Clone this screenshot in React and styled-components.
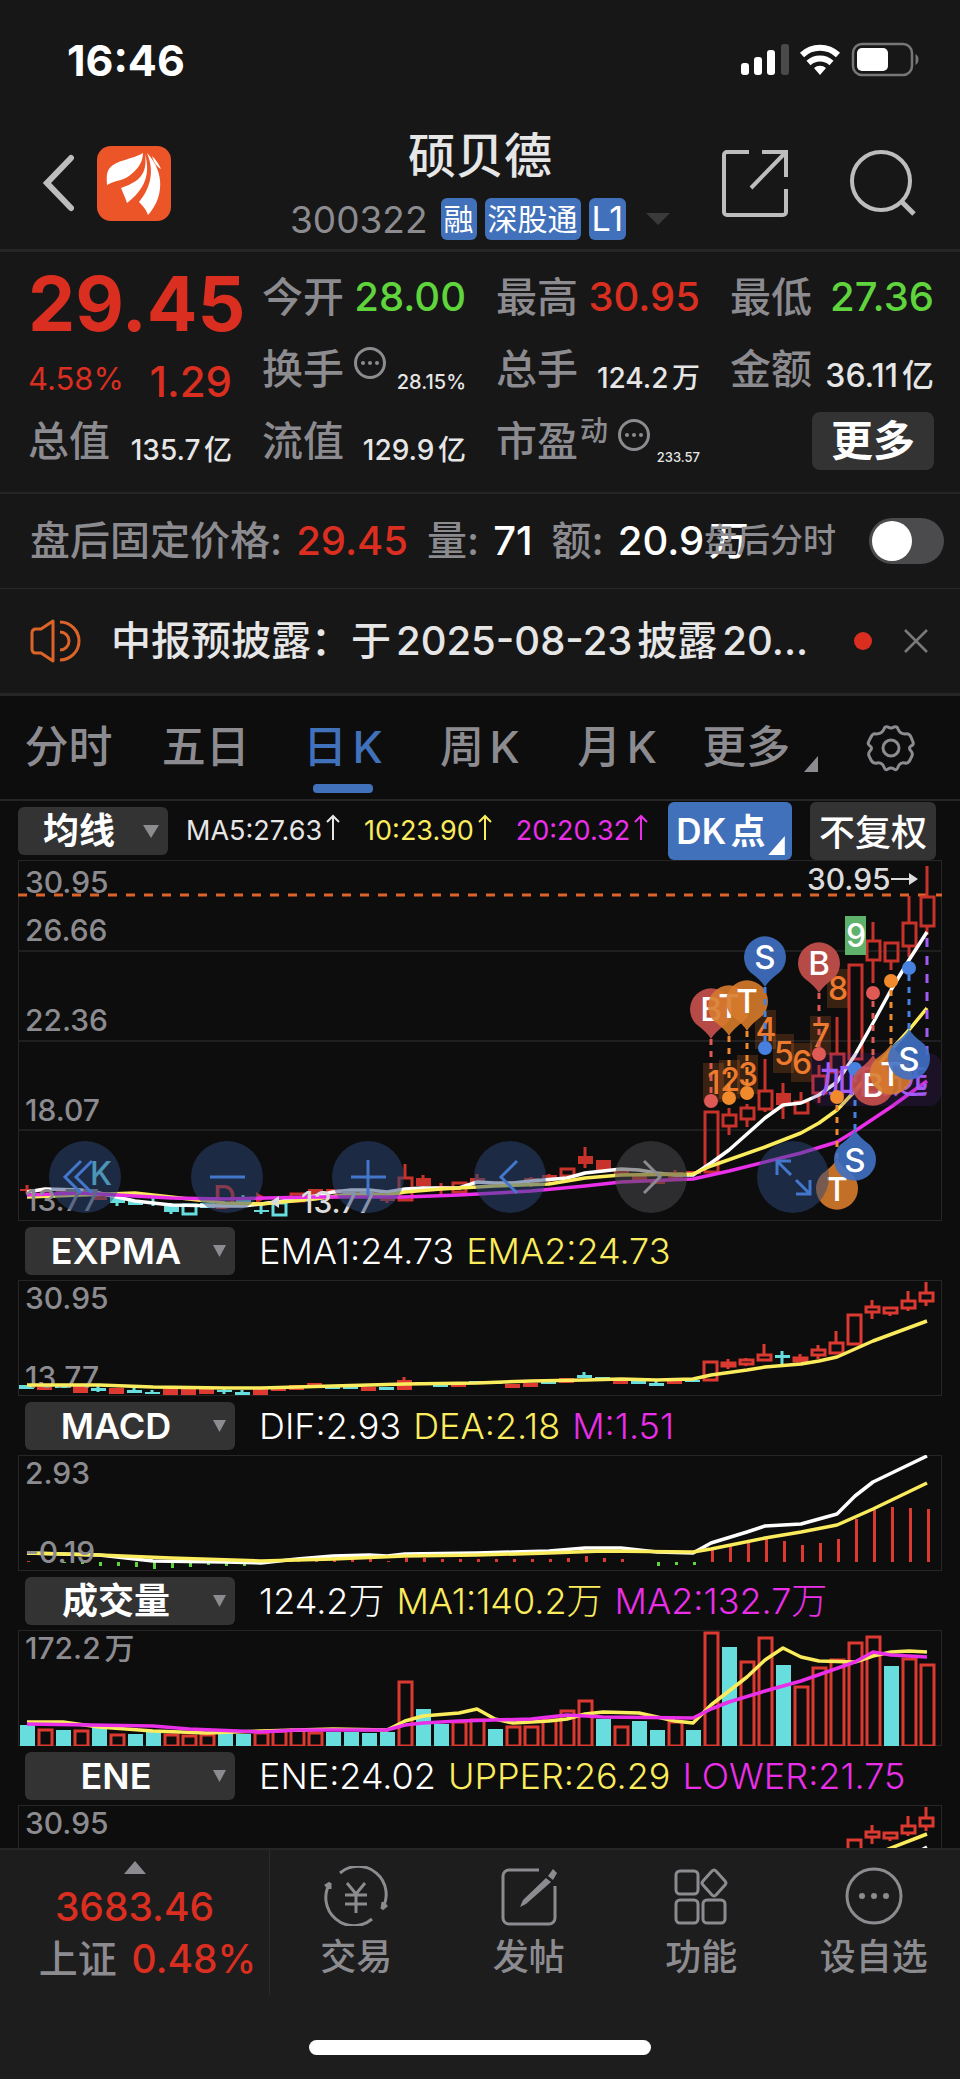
import React from "react";
import styled, { createGlobalStyle } from 'styled-components'

const RED = '#da2e20'
const GREEN = '#5fd43c'
const YELLOW = '#fbec5d'
const MAGENTA = '#ea2fe9'
const CYAN = '#67dedd'
const BLUE = '#4171bb'
const GRAY = '#8c8b90'
const LIGHT = '#e6e6e6'

const GlobalStyle = createGlobalStyle`
    * {
        box-sizing: border-box;
    }
    body {
        margin: 0;
        background: #171717;
        color: ${LIGHT};
        font-family: Inter, "Noto Sans CJK SC", sans-serif;
        text-autospace: normal;
    }
    button, select {
        margin: 0;
        padding: 0;
        border: 0;
        background: none;
        color: inherit;
        font: inherit;
    }
    svg {
        display: block;
    }
`

const Page = styled.div`
    display: flex;
    flex-direction: column;
    height: 100vh;
    overflow: hidden;
`

const StatusBar = styled.div`
    flex: none;
    display: flex;
    justify-content: space-between;
    align-items: center;
    height: 120px;
    padding: 0 40px 0 67px;
    color: white;
    font-size: 43px;
    font-weight: 700;
`

const Header = styled.header`
    flex: none;
    display: grid;
    grid-template-columns: 1fr auto 1fr;
    height: 132px;
    border-bottom: 3px solid #262626;
    .left, .right {
        display: flex;
        align-items: center;
    }
    .left {
        padding: 0 0 4px 43px;
        gap: 23px;
    }
    .right {
        justify-content: flex-end;
        padding: 0 44px 4px 0;
        gap: 62px;
    }
`

const Title = styled.div`
    text-align: center;
    h1 {
        margin: 4px 0 0;
        font-size: 48px;
        line-height: 64px;
        font-weight: 500;
    }
    .code {
        display: flex;
        align-items: center;
        gap: 8px;
        height: 62px;
        font-size: 37px;
        color: ${GRAY};
    }
    .code > span:first-child {
        margin-right: 5px;
    }
    .code svg {
        margin-left: 12px;
    }
`

const Badge = styled.span`
    padding: 0 3px;
    border-radius: 6px;
    background: ${BLUE};
    color: white;
    font-size: ${p => p.$level ? 34 : 30}px;
    line-height: 42px;
`

const Quote = styled.section`
    flex: none;
    display: grid;
    grid-template-columns: repeat(4, minmax(0, 1fr));
    grid-auto-rows: 72px;
    column-gap: 30px;
    padding: 9px 26px 15px 28px;
    border-bottom: 2px solid #262626;
    .price {
        grid-row: span 2;
    }
    .last {
        color: ${RED};
        font-size: 75px;
        font-weight: 700;
        line-height: 86px;
    }
    .change {
        display: flex;
        justify-content: space-between;
        align-items: center;
        color: ${RED};
        font-size: 31px;
        line-height: 58px;
    }
    .change b {
        padding-top: 6px;
        font-size: 42px;
        font-weight: 500;
    }
`

const Cell = styled.div`
    display: flex;
    justify-content: space-between;
    align-items: flex-end;
    white-space: nowrap;
    .label {
        display: flex;
        color: ${GRAY};
        font-size: 41px;
        font-weight: 500;
        line-height: 72px;
    }
    .label svg {
        margin: 14px 0 0 10px;
    }
    .label small {
        padding-left: 2px;
        font-size: 28px;
        line-height: 52px;
    }
    .value {
        padding-bottom: ${p => p.$size > 36 ? 16 : 13}px;
        color: ${p => p.$color || LIGHT};
        font-size: ${p => p.$size || 28}px;
        font-weight: 500;
        line-height: 1;
    }
`

const MoreButton = styled.button`
    justify-self: end;
    align-self: center;
    width: 122px;
    height: 58px;
    border-radius: 8px;
    background: #333333;
    color: white;
    font-size: 42px;
    font-weight: 700;
    line-height: 56px;
`

const FixedPrice = styled.section`
    flex: none;
    display: flex;
    align-items: center;
    height: 95px;
    padding: 0 16px 0 30px;
    border-bottom: 1px solid #2a2a2a;
    color: ${GRAY};
    white-space: nowrap;
    p {
        flex: 1;
        min-width: 0;
        margin: 0;
        padding-bottom: 6px;
        font-size: 40px;
        font-weight: 500;
    }
    p b {
        margin: 0 14px;
        color: white;
        font-weight: 500;
    }
    p b.up {
        color: ${RED};
    }
    label {
        display: flex;
        align-items: center;
        gap: 33px;
        font-size: 33px;
        font-weight: 500;
    }
    label span {
        padding-bottom: 6px;
    }
    input {
        appearance: none;
        width: 75px;
        height: 46px;
        margin: 0;
        padding: 3px;
        border-radius: 23px;
        background: #4b4b4d;
    }
    input::before {
        content: "";
        display: block;
        width: 40px;
        height: 40px;
        border-radius: 50%;
        background: white;
    }
    input:checked::before {
        margin-left: auto;
    }
`

const Notice = styled.section`
    flex: none;
    display: flex;
    align-items: center;
    height: 107px;
    padding: 0 32px 0 30px;
    border-bottom: 3px solid #262626;
    p {
        flex: 1;
        margin: 0;
        padding: 0 0 6px 29px;
        font-size: 40px;
        font-weight: 500;
        white-space: nowrap;
    }
    i {
        width: 18px;
        height: 18px;
        margin-right: 32px;
        border-radius: 50%;
        background: ${RED};
    }
`

const Tabs = styled.nav`
    flex: none;
    display: grid;
    grid-template-columns: repeat(7, 1fr);
    height: 105px;
    background: #0d0d0d;
    border-bottom: 2px solid #262626;
`

const Tab = styled.button`
    display: flex;
    justify-content: center;
    position: relative;
    color: ${p => p.$active ? BLUE : GRAY};
    font-size: 44px;
    font-weight: 500;
    line-height: 102px;
    white-space: nowrap;
    svg {
        align-self: center;
    }
    .corner {
        margin: 32px -12px 0 14px;
    }
    &::after {
        content: "";
        display: ${p => p.$active ? 'block' : 'none'};
        position: absolute;
        bottom: 6px;
        width: 60px;
        height: 9px;
        border-radius: 4px;
        background: ${BLUE};
    }
`

const Charts = styled.main`
    flex: 1;
    min-height: 0;
    overflow: hidden;
    padding: 0 18px;
    background: #0d0d0d;
`

const PanelHead = styled.div`
    display: flex;
    align-items: center;
    height: 59px;
    padding-left: ${p => p.$main ? 0 : 7}px;
    white-space: nowrap;
    .values {
        flex: 1;
        display: flex;
        gap: ${p => p.$main ? 24 : 12}px;
        padding-left: ${p => p.$main ? 18 : 24}px;
        font-size: ${p => p.$main ? 27 : 36}px;
        font-weight: ${p => p.$main ? 400 : 300};
        line-height: 48px;
        text-autospace: no-autospace;
    }
    .values svg {
        display: inline-block;
        margin-left: 4px;
    }
`

const Picker = styled.label`
    position: relative;
    select {
        display: block;
        appearance: none;
        width: ${p => p.$main ? 150 : 210}px;
        height: 48px;
        padding-right: 28px;
        border-radius: 6px;
        background: #333333;
        color: white;
        font-size: 36px;
        font-weight: ${p => p.$main ? 700 : 600};
        text-align-last: center;
    }
    svg {
        position: absolute;
        right: 9px;
        top: 18px;
        pointer-events: none;
    }
`

const ToolButton = styled.button`
    position: relative;
    width: ${p => p.$blue ? 124 : 126}px;
    height: 58px;
    margin-right: ${p => p.$blue ? 18 : 6}px;
    padding: ${p => p.$blue ? '0 18px 4px 0' : '0 0 2px'};
    border-radius: 6px;
    background: ${p => p.$blue ? BLUE : '#333333'};
    color: white;
    font-size: ${p => p.$blue ? 35 : 36}px;
    font-weight: ${p => p.$blue ? 600 : 500};
    svg {
        position: absolute;
        right: 7px;
        bottom: 5px;
    }
`

const ChartBox = styled.div`
    position: relative;
    svg.plot {
        width: 100%;
        height: auto;
    }
    text {
        font-size: 30px;
        font-weight: 500;
    }
`

const Floating = styled.div`
    position: absolute;
    left: 31px;
    right: 113px;
    bottom: 8px;
    display: flex;
    justify-content: space-between;
`

const RoundButton = styled.button`
    display: flex;
    align-items: center;
    justify-content: center;
    width: 72px;
    height: 72px;
    border-radius: 50%;
    background: ${p => p.$gray ? 'rgba(72, 72, 76, 0.55)' : 'rgba(44, 72, 122, 0.5)'};
    color: ${p => p.$gray ? '#8c8b90' : '#4277cc'};
`

const BottomBar = styled.footer`
    flex: none;
    display: grid;
    grid-template-columns: 270px repeat(4, 1fr);
    padding-bottom: 24px;
    background: #1d1d1d;
    border-top: 2px solid #262626;
    color: ${GRAY};
`

const Index = styled.button`
    display: flex;
    flex-direction: column;
    align-items: center;
    height: 145px;
    padding-top: 11px;
    border-right: 1px solid #2a2a2a;
    font-size: 39px;
    font-weight: 500;
    line-height: 52px;
    white-space: nowrap;
    b {
        color: ${RED};
        font-weight: 500;
    }
    .point {
        margin-top: 7px;
    }
    .rate {
        padding-left: 26px;
    }
    .rate b {
        margin-left: 10px;
    }
`

const NavItem = styled.button`
    display: flex;
    flex-direction: column;
    align-items: center;
    padding-top: 16px;
    font-size: 36px;
    font-weight: 500;
    line-height: 62px;
`

const HomeIndicator = styled.div`
    grid-column: 1 / -1;
    justify-self: center;
    width: 342px;
    height: 15px;
    margin-top: 45px;
    border-radius: 8px;
    background: white;
`

/* icons */

const Caret = ({ w = 16, h = 13, color = GRAY }) => (
    <svg width={w} height={h} viewBox="0 0 16 13" preserveAspectRatio="none" fill={color}>
        <path d="M0 0h16L8 13z" />
    </svg>
)

const Corner = ({ size = 14, color = GRAY, className }) => (
    <svg className={className} width={size} height={size + 2} viewBox="0 0 14 16" fill={color}>
        <path d="M14 0v16H0z" />
    </svg>
)

const UpArrow = () => (
    <svg width="14" height="26" viewBox="0 0 14 26" fill="none" stroke="currentColor" strokeWidth="2">
        <path d="M7 26V2M1 8l6-6 6 6" />
    </svg>
)

const StatusIcons = () => (
    <svg width="180" height="36" viewBox="740 42 180 36">
        <g fill="white">
            <rect x="741" y="63" width="8" height="12" rx="3" />
            <rect x="754" y="57" width="8" height="18" rx="3" />
            <rect x="767" y="50" width="8" height="25" rx="3" />
            <rect x="781" y="44" width="8" height="31" rx="3" fill="#4a4a4a" />
            <path d="M820 75l-6-7a9 9 0 0 1 12 0z" />
        </g>
        <g fill="none" stroke="white" strokeWidth="6">
            <path d="M802 55a26 26 0 0 1 36 0" />
            <path d="M808.500 63a17 17 0 0 1 23 0" />
        </g>
        <rect x="853" y="44" width="59" height="31" rx="9" fill="none" stroke="#77777a" strokeWidth="2.500" />
        <rect x="857" y="48" width="31" height="23" rx="5" fill="white" />
        <path d="M915.500 54c4 2 4 9 0 11z" fill="#77777a" />
    </svg>
)

const BackIcon = () => (
    <svg width="31" height="58" viewBox="0 0 31 58" fill="none" stroke="#bdbdbd" strokeWidth="6" strokeLinecap="round">
        <path d="M28 4L4 29l24 25" />
    </svg>
)

const Logo = () => (
    <svg width="74" height="75" viewBox="0 0 74 75">
        <rect width="74" height="75" rx="14" fill="#eb5528" />
        <g fill="white">
            <path d="M46 7C35 14 16 14 11 25c-2 5-1 9-1 14 8-5 16-4 22-9 8-6 14-13 14-23z" />
            <path d="M48 8c3 21-7 28-24 34 2 5 4 9 6 15 17-13 24-28 18-49z" />
            <path d="M50 7c9 21 1 38-8 49 3 3 7 7 9 13 15-16 18-42-1-62z" />
        </g>
        <path d="M55 10c4 4 7 8 9 13-4-2-7-6-9-13z" fill="white" />
    </svg>
)

const ShareIcon = () => (
    <svg width="66" height="67" viewBox="0 0 66 67" fill="none" stroke="#bdbdbd" strokeWidth="4">
        <path d="M27 2H5a3 3 0 0 0-3 3v57a3 3 0 0 0 3 3h56a3 3 0 0 0 3-3V39M40 2h24v25M63 3L29 38" />
    </svg>
)

const SearchIcon = () => (
    <svg width="66" height="67" viewBox="0 0 66 67" fill="none" stroke="#bdbdbd" strokeWidth="4">
        <circle cx="31" cy="31" r="29" />
        <path d="M51 51l13 13" strokeWidth="5" />
    </svg>
)

const Dots = ({ size = 32, stroke = 3 }) => (
    <svg width={size} height={size} viewBox="0 0 32 32" fill={GRAY}>
        <circle cx="16" cy="16" r="14.500" fill="none" stroke={GRAY} strokeWidth={stroke} />
        <circle cx="9" cy="16" r="2" />
        <circle cx="16" cy="16" r="2" />
        <circle cx="23" cy="16" r="2" />
    </svg>
)

const Speaker = () => (
    <svg width="52" height="44" viewBox="0 0 52 44" fill="none" stroke="#dd6429" strokeWidth="3">
        <path d="M23 2L11 10H6c-3 0-4 2-4 4v16c0 2 1 4 4 4h5l12 8z" strokeLinejoin="round" />
        <path d="M30 3a19 19 0 0 1 0 38M30 13a9 9 0 0 1 0 18" />
    </svg>
)

const Close = () => (
    <svg width="24" height="24" viewBox="0 0 24 24" stroke="#7a7a7a" strokeWidth="2.500">
        <path d="M1 1l22 22M23 1L1 23" />
    </svg>
)

const Gear = () => (
    <svg width="50" height="48" viewBox="0 0 50 48" fill="none" stroke={GRAY} strokeWidth="3">
        <path d="M18 5q1-3 4-2 3 2 6 0 3-1 4 2 2 5 7 5 4-1 6 3l2 5q1 3-2 4-3 2 0 5 2 2 1 5l-2 4q-2 4-5 3-5-1-7 4-1 4-4 2-3-2-6 0-3 2-4-2-2-5-7-4-4 1-6-3l-2-4q-1-3 1-5 3-3 0-5-3-2-1-5l2-4q2-4 5-3 6 0 8-5z" />
        <circle cx="25" cy="24" r="8" />
    </svg>
)

const TradeIcon = () => (
    <svg width="66" height="60" viewBox="0 0 66 60" fill="none" stroke={GRAY} strokeWidth="3">
        <path d="M17 7a28 28 0 0 1 42 36l5-4M49 53A28 28 0 0 1 7 17l-5 3M59 43l1-7M7 17l0 6" />
        <path d="M24 17l9 11 9-11M22 29h22M22 38h22M33 28v19" />
    </svg>
)

const PostIcon = () => (
    <svg width="56" height="60" viewBox="0 0 56 60" fill="none" stroke={GRAY} strokeWidth="3">
        <path d="M38 4H8a6 6 0 0 0-6 6v42a6 6 0 0 0 6 6h40a6 6 0 0 0 6-6V20" />
        <path d="M45 12l5 4-25 22-6 3 3-7zM47 10l5-7 4 4-4 7z" fill={GRAY} stroke="none" />
    </svg>
)

const GridIcon = () => (
    <svg width="54" height="60" viewBox="0 0 54 60" fill="none" stroke={GRAY} strokeWidth="3">
        <rect x="2" y="5" width="22" height="23" rx="4" />
        <rect x="2" y="34" width="22" height="23" rx="4" />
        <rect x="29" y="34" width="22" height="23" rx="4" />
        <path d="M38 5q2-2 4 0l9 10q2 2 0 4l-9 10q-2 2-4 0l-9-10q-2-2 0-4z" />
    </svg>
)

const MoreIcon = () => (
    <svg width="60" height="60" viewBox="0 0 60 60" fill={GRAY}>
        <circle cx="30" cy="30" r="27" fill="none" stroke={GRAY} strokeWidth="3" />
        <circle cx="18" cy="30" r="3" />
        <circle cx="30" cy="30" r="3" />
        <circle cx="42" cy="30" r="3" />
    </svg>
)

const FLOAT_ICONS = [
    ['最早', 'M20 8L4 24l16 16M31 8L15 24l16 16'],
    ['缩小', 'M7 24h35'],
    ['放大', 'M7 24h35M24 7v35'],
    ['向左', 'M31 8L15 24l16 16'],
    ['向右', 'M17 8l16 16-16 16'],
    ['全屏', 'M8 22V8h14M8 8l14 14M41 27v14H27M41 41L27 27'],
]

/* chart data, one entry per day: kind, top, bottom, high, low
   r hollow red, R solid red, c hollow cyan, C solid cyan */
const DAILY = [
    ['R', 1189, 1191, 1185, 1194], ['R', 1188, 1192], ['R', 1190, 1193], ['R', 1190, 1194], ['R', 1195, 1200],
    ['C', 1197, 1203, 1193, 1206], ['C', 1200, 1205], ['C', 1202, 1204, 1198, 1206], ['C', 1206, 1212, 1203, 1214], ['c', 1204, 1214],
    ['C', 1203, 1208], ['C', 1202, 1207], ['C', 1199, 1207, 1195], ['C', 1210, 1212, 1205, 1214], ['c', 1202, 1215],
    ['r', 1193, 1201], ['R', 1189, 1195], ['R', 1189, 1194], ['R', 1190, 1195], ['R', 1192, 1197],
    ['R', 1195, 1201, 1192, 1203], ['r', 1177, 1200, 1164], ['R', 1178, 1186, 1175, 1190], ['R', 1186, 1190, 1183, 1194], ['r', 1182, 1192],
    ['R', 1178, 1182, 1174], ['R', 1184, 1187], ['R', 1181, 1184], ['R', 1178, 1184, 1177, 1187], ['R', 1175, 1178, 1174, 1184],
    ['r', 1168, 1176], ['R', 1156, 1164, 1147, 1168], ['R', 1160, 1170], ['R', 1171, 1175], ['R', 1175, 1180],
    ['R', 1181, 1184], ['R', 1172, 1178, 1170], ['R', 1171, 1174], ['r', 1111, 1172], ['r', 1114, 1126, 1108, 1135],
    ['r', 1107, 1119, 1104, 1127], ['r', 1090, 1109, 1059, 1112], ['R', 1093, 1105, 1083, 1119], ['r', 1101, 1113, 1092], ['r', 1075, 1093, 1065, 1103],
    ['r', 1053, 1072, 1017, 1078], ['r', 964, 1059], ['r', 940, 960, 922, 983], ['r', 942, 961, 942, 970], ['r', 922, 946, 896, 957],
    ['r', 896, 926, 866, 935],
]

const SMALL = [
    ['C', 1385, 1389], ['R', 1386, 1390], ['C', 1386, 1388], ['R', 1386, 1393], ['C', 1388, 1391, 1386, 1392],
    ['R', 1388, 1394], ['C', 1390, 1393, 1387], ['C', 1392, 1394, 1390], ['R', 1389, 1395], ['R', 1389, 1395],
    ['R', 1388, 1394], ['C', 1390, 1392, 1389, 1394], ['C', 1392, 1395, 1390], ['R', 1389, 1395], ['R', 1386, 1391],
    ['R', 1385, 1390], ['R', 1383, 1386], ['C', 1387, 1389], ['C', 1387, 1389], ['R', 1387, 1391],
    ['C', 1387, 1390], ['R', 1380, 1390, 1377], ['C', 1382, 1384], ['C', 1385, 1387], ['R', 1384, 1387],
    ['C', 1381, 1384], ['C', 1382, 1384], ['R', 1384, 1388], ['R', 1383, 1387], ['C', 1382, 1384],
    ['R', 1378, 1383], ['C', 1375, 1378, 1372], ['C', 1377, 1379], ['R', 1380, 1384], ['C', 1381, 1384],
    ['C', 1383, 1386, 1381], ['R', 1380, 1384], ['C', 1380, 1382], ['r', 1361, 1380], ['r', 1362, 1366, 1359, 1369],
    ['r', 1359, 1364, 1358, 1366], ['r', 1354, 1360, 1344], ['C', 1355, 1358, 1351, 1364], ['r', 1357, 1361, 1354], ['r', 1349, 1355, 1345, 1359],
    ['r', 1342, 1353, 1331], ['r', 1314, 1344], ['r', 1306, 1312, 1300, 1319], ['r', 1307, 1313, 1307, 1316], ['r', 1300, 1308, 1291, 1311],
    ['r', 1292, 1301, 1282, 1306],
]

const VOLUME = [
    'C1724', 'r1728', 'C1729', 'r1729', 'C1726', 'r1733', 'C1733', 'C1731', 'r1733', 'r1734', 'r1733', 'C1732', 'C1733',
    'r1731', 'r1729', 'r1728', 'r1731', 'C1731', 'C1731', 'C1732', 'C1731', 'r1680', 'C1708', 'C1723', 'r1720', 'r1718',
    'C1728', 'r1725', 'r1725', 'r1718', 'r1709', 'r1699', 'C1718', 'r1725', 'C1720', 'C1729', 'r1720', 'C1729', 'r1631',
    'C1646', 'r1660', 'r1636', 'C1664', 'r1685', 'r1666', 'r1658', 'r1641', 'r1635', 'C1665', 'r1657', 'r1663',
]

const MACD_BARS = [
    1, 0, -1, -2, -4, -4, -5, -7, -6, -5, -3, -4, -4, -1, 0, 1, 2, 3, 3, 3, 1, 4, 4, 3, 3, 3, 3,
    3, 3, 3, 4, 6, 4, 3, 0, -4, -3, -3, 12, 18, 21, 25, 21, 17, 19, 23, 43, 52, 55, 54, 53,
]

const LINES = {
    ma5: '27,1192 45,1189 81,1190 99,1193 117,1197 135,1201 153,1203 171,1205 225,1206 243,1206 261,1204 297,1199 315,1196 333,1192 351,1190 369,1190 387,1192 405,1189 423,1188 459,1188 477,1182 495,1183 513,1183 531,1181 567,1178 585,1173 603,1171 621,1169 639,1170 657,1173 675,1175 693,1175 711,1163 729,1150 765,1118 783,1105 801,1103 819,1095 837,1082 855,1055 873,1023 891,990 909,960 927,932',
    ma10: '27,1197 81,1195 135,1193 171,1197 225,1203 261,1204 315,1199 351,1194 387,1195 405,1192 441,1189 495,1186 549,1184 585,1178 621,1175 693,1174 711,1166 765,1147 801,1133 819,1123 837,1110 855,1091 891,1050 909,1030 927,1008',
    ma20: '27,1195 81,1193 135,1196 171,1198 225,1199 315,1197 405,1197 459,1195 531,1191 585,1186 621,1182 693,1179 729,1171 801,1153 837,1142 855,1131 891,1107 927,1081',
    ema: '27,1385 99,1385 153,1387 225,1388 261,1388 297,1387 333,1386 405,1384 477,1383 531,1381 585,1380 621,1379 657,1380 693,1379 711,1375 747,1370 765,1367 801,1364 819,1361 837,1357 873,1341 927,1321',
    dif: '27,1553 99,1555 135,1559 153,1561 225,1562 261,1563 297,1559 333,1556 369,1555 387,1556 405,1554 477,1553 513,1552 549,1551 585,1548 621,1548 657,1552 693,1553 711,1543 747,1532 765,1526 801,1524 837,1514 855,1496 873,1482 927,1456',
    dea: '27,1553 99,1555 171,1558 261,1561 333,1559 405,1556 477,1555 549,1553 603,1551 693,1552 711,1549 765,1538 801,1532 837,1525 873,1509 927,1483',
    vol1: '27,1721 63,1721 99,1726 153,1730 207,1732 261,1730 297,1729 333,1728 387,1729 405,1720 423,1715 459,1712 477,1708 495,1718 513,1722 549,1720 567,1718 585,1713 603,1711 639,1712 675,1720 693,1722 711,1704 747,1676 765,1659 783,1647 801,1656 819,1660 855,1661 873,1655 891,1651 909,1650 927,1651',
    vol2: '27,1723 153,1725 189,1728 261,1731 297,1729 387,1729 405,1724 423,1722 459,1720 531,1718 567,1714 603,1716 693,1717 711,1708 729,1701 765,1690 783,1685 801,1680 855,1661 873,1651 891,1654 927,1656',
}

const COUNTS = [
    ['1', 714, 1063], ['2', 730, 1060], ['3', 748, 1055], ['4', 766, 1010], ['5', 784, 1034],
    ['6', 802, 1043], ['7', 821, 1016], ['8', 838, 969], ['9', 856, 916],
]

const PIN_COLORS = { B: '#c9514c', T: '#d67a2b', S: '#3f70c4' }
const DOT_COLORS = { B: '#e05a55', T: '#f08a2c', S: '#4781e0' }

/* letter, x, centre of the pin, centre of the dot */
const PINS = [
    ['B', 711, 1009, 1101], ['T', 729, 1006, 1098], ['T', 747, 1001, 1093], ['S', 765, 957, 1048], ['B', 819, 963, 1054],
    ['T', 837, 1189, 1097], ['S', 855, 1160, 1069], ['B', 873, 1085, 993], ['T', 891, 1074, 981], ['S', 909, 1059, 968],
]

const dayX = i => 27 + 18 * i

function Candles({ data, red = '#c7332a' }) {
    return data.map(([kind, top, bottom, high = top, low = bottom], i) => {
        const x = dayX(i)
        const color = kind.toLowerCase() === 'r' ? red : CYAN
        const hollow = kind === 'r' || kind === 'c'
        return (
            <g key={i} stroke={color} strokeWidth="3" fill={hollow ? 'none' : color}>
                {high < top && <path d={`M${x} ${high}V${top}`} />}
                {low > bottom && <path d={`M${x} ${bottom}V${low}`} />}
                {hollow
                    ? <rect x={x - 6} y={top + 1} width="13" height={bottom - top - 1} />
                    : <rect x={x - 7} y={top} width="15" height={bottom - top} stroke="none" />}
            </g>
        )
    })
}

function Line({ points, color }) {
    return <polyline points={points} fill="none" stroke={color} strokeWidth="3.500" strokeLinejoin="round" />
}

function Pin({ letter, x, y, dot }) {
    const d = dot > y ? 1 : -1
    return (
        <g>
            <path d={`M${x} ${y + 30 * d}V${dot}`} stroke={DOT_COLORS[letter]} strokeWidth="3" strokeDasharray="6 6" />
            <circle cx={x} cy={dot} r="7" fill={DOT_COLORS[letter]} />
            <g fill={PIN_COLORS[letter]} opacity="0.9">
                <path d={`M${x} ${y + 30 * d}Q${x - 3} ${y + 24 * d} ${x - 15} ${y + 15 * d}A21 21 0 1 ${d > 0 ? 1 : 0} ${x + 15} ${y + 15 * d}Q${x + 3} ${y + 24 * d} ${x} ${y + 30 * d}z`} />
            </g>
            <text x={x} y={y + 12} textAnchor="middle" fill="white" style={{ fontSize: 33 }}>{letter}</text>
        </g>
    )
}

function Plot({ y, height, children }) {
    return (
        <svg className="plot" viewBox={`18 ${y} 924 ${height}`}>
            <rect x="18.500" y={y + 0.5} width="923" height={height - 1} fill="none" stroke="#262626" />
            {children}
        </svg>
    )
}

function MainChart() {
    return (
        <ChartBox>
            <Plot y={860} height={361}>
                <path d="M19 951h923M19 1041h923M19 1130h923" stroke="#1f1f21" strokeWidth="2" />
                <g fill={GRAY}>
                    <text x="25" y="893">30.95</text>
                    <text x="25" y="941">26.66</text>
                    <text x="25" y="1031">22.36</text>
                    <text x="25" y="1121">18.07</text>
                </g>
                <path d="M18 895h924" stroke="#dd6429" strokeWidth="3" strokeDasharray="9 9" />
                <Candles data={DAILY} />
                <text x="90" y="1185" fill="#6fe3f2" style={{ fontSize: 32 }}>K</text>
                <text x="213" y="1209" fill={RED} style={{ fontSize: 32 }}>D</text>
                <path d="M238 1197h18v-5l10 6-10 6v-5h-18z" fill="#c7332a" />
                <Line points={LINES.ma5} color="white" />
                <Line points={LINES.ma10} color={YELLOW} />
                <Line points={LINES.ma20} color={MAGENTA} />
                <text x="25" y="1211" fill={GRAY}>13.77</text>
                <g fill="#dcdcdc">
                    <path d="M270 1202l9-6v12z" />
                    <text x="301" y="1213">13.77</text>
                    <text x="807" y="890">30.95</text>
                    <path d="M891 878h18v-5l9 6-9 6v-5h-18z" />
                </g>
                {COUNTS.map(([n, x, y]) => (
                    <g key={n}>
                        <rect x={x - 11} y={y} width="21" height="39" fill={n === '9' ? '#5eb26c' : 'rgba(240, 122, 42, 0.2)'} />
                        <text x={x} y={y + 31} textAnchor="middle" fill={n === '9' ? 'white' : '#ee7a2e'} style={{ fontSize: 32 }}>{n}</text>
                    </g>
                ))}
                <rect x="811" y="1053" width="130" height="53" rx="12" fill="rgba(90, 40, 150, 0.2)" />
                <path d="M927 938v118" stroke="#a25cf5" strokeWidth="3" strokeDasharray="9 9" />
                <text x="820" y="1093" fill="#a25cf5" style={{ fontSize: 36 }}>加自选</text>
                {PINS.map(([letter, x, y, dot]) => <Pin key={x} letter={letter} x={x} y={y} dot={dot} />)}
            </Plot>
            <Floating>
                {FLOAT_ICONS.map(([label, d]) => (
                    <RoundButton key={label} aria-label={label} $gray={label === '向右'}>
                        <svg width="48" height="48" viewBox="0 0 48 48" fill="none" stroke="currentColor" strokeWidth="3">
                            <path d={d} />
                        </svg>
                    </RoundButton>
                ))}
            </Floating>
        </ChartBox>
    )
}

function Panel({ name, values, children }) {
    return (
        <section>
            <PanelHead>
                <Picker>
                    <select aria-label="指标">
                        <option>{name}</option>
                    </select>
                    <Caret w={13} h={12} />
                </Picker>
                <div className="values">
                    {values.map(([text, color]) => <span key={text} style={{ color }}>{text}</span>)}
                </div>
            </PanelHead>
            <ChartBox>{children}</ChartBox>
        </section>
    )
}

function App() {
    return (
        <Page>
            <GlobalStyle />
            <StatusBar>
                <span>16:46</span>
                <StatusIcons />
            </StatusBar>
            <Header>
                <div className="left">
                    <button aria-label="返回"><BackIcon /></button>
                    <Logo />
                </div>
                <Title>
                    <h1>硕贝德</h1>
                    <div className="code">
                        <span>300322</span>
                        <Badge>融</Badge>
                        <Badge>深股通</Badge>
                        <Badge $level>L1</Badge>
                        <Caret w={24} h={12} color="#3a3a3a" />
                    </div>
                </Title>
                <div className="right">
                    <button aria-label="分享"><ShareIcon /></button>
                    <button aria-label="搜索"><SearchIcon /></button>
                </div>
            </Header>
            <Quote>
                <div className="price">
                    <div className="last">29.45</div>
                    <div className="change"><span>4.58%</span><b>1.29</b></div>
                </div>
                <Cell $color={GREEN} $size={40}><span className="label">今开</span><span className="value">28.00</span></Cell>
                <Cell $color={RED} $size={40}><span className="label">最高</span><span className="value">30.95</span></Cell>
                <Cell $color={GREEN} $size={40}><span className="label">最低</span><span className="value">27.36</span></Cell>
                <Cell $size={20}><span className="label">换手<Dots /></span><span className="value">28.15%</span></Cell>
                <Cell><span className="label">总手</span><span className="value">124.2万</span></Cell>
                <Cell $size={32}><span className="label">金额</span><span className="value">36.11亿</span></Cell>
                <Cell><span className="label">总值</span><span className="value">135.7亿</span></Cell>
                <Cell><span className="label">流值</span><span className="value">129.9亿</span></Cell>
                <Cell $size={13}><span className="label">市盈<small>动</small><Dots /></span><span className="value">233.57</span></Cell>
                <MoreButton>更多</MoreButton>
            </Quote>
            <FixedPrice>
                <p>盘后固定价格:<b className="up">29.45</b>量:<b>71</b>额:<b>20.9万</b></p>
                <label><span>盘后分时</span><input type="checkbox" /></label>
            </FixedPrice>
            <Notice>
                <Speaker />
                <p>中报预披露：于2025-08-23披露20...</p>
                <i />
                <button aria-label="关闭"><Close /></button>
            </Notice>
            <Tabs>
                <Tab>分时</Tab>
                <Tab>五日</Tab>
                <Tab $active>日K</Tab>
                <Tab>周K</Tab>
                <Tab>月K</Tab>
                <Tab>更多<Corner className="corner" /></Tab>
                <Tab aria-label="设置"><Gear /></Tab>
            </Tabs>
            <Charts>
                <PanelHead $main>
                    <Picker $main>
                        <select aria-label="主图指标">
                            <option>均线</option>
                        </select>
                        <Caret />
                    </Picker>
                    <div className="values">
                        <span>MA5:27.63<UpArrow /></span>
                        <span style={{ color: YELLOW }}>10:23.90<UpArrow /></span>
                        <span style={{ color: MAGENTA }}>20:20.32<UpArrow /></span>
                    </div>
                    <ToolButton $blue>DK点<Corner size={17} color="white" /></ToolButton>
                    <ToolButton>不复权</ToolButton>
                </PanelHead>
                <MainChart />
                <Panel name="EXPMA" values={[['EMA1:24.73', 'white'], ['EMA2:24.73', YELLOW]]}>
                    <Plot y={1280} height={116}>
                        <g transform="translate(-1 0)">
                            <Candles data={SMALL} red="#dc3a30" />
                        </g>
                        <text x="25" y="1309" fill={GRAY}>30.95</text>
                        <text x="25" y="1388" fill={GRAY}>13.77</text>
                        <Line points={LINES.ema} color={YELLOW} />
                    </Plot>
                </Panel>
                <Panel name="MACD" values={[['DIF:2.93', 'white'], ['DEA:2.18', YELLOW], ['M:1.51', MAGENTA]]}>
                    <Plot y={1455} height={116}>
                        {MACD_BARS.map((v, i) => (
                            <rect
                                key={i}
                                x={dayX(i)}
                                y={v > 0 ? 1562 - v : 1562}
                                width="3"
                                height={Math.abs(v)}
                                fill={v > 0 ? '#dc3a30' : GREEN}
                            />
                        ))}
                        <text x="25" y="1484" fill={GRAY}>2.93</text>
                        <Line points={LINES.dif} color="white" />
                        <Line points={LINES.dea} color={YELLOW} />
                        <text x="25" y="1563" fill={GRAY}>-0.19</text>
                    </Plot>
                </Panel>
                <Panel name="成交量" values={[['124.2万', 'white'], ['MA1:140.2万', YELLOW], ['MA2:132.7万', MAGENTA]]}>
                    <Plot y={1629} height={116}>
                        <text x="25" y="1658" fill={GRAY}>172.2万</text>
                        <Candles data={VOLUME.map(v => [v[0], Number(v.slice(1)), 1745])} red="#dc3a30" />
                        <Line points={LINES.vol1} color={YELLOW} />
                        <Line points={LINES.vol2} color={MAGENTA} />
                    </Plot>
                </Panel>
                <Panel name="ENE" values={[['ENE:24.02', 'white'], ['UPPER:26.29', YELLOW], ['LOWER:21.75', MAGENTA]]}>
                    <Plot y={1804} height={116}>
                        <text x="25" y="1833" fill={GRAY}>30.95</text>
                        <g transform="translate(-1 524)">
                            <Candles data={SMALL} red="#dc3a30" />
                        </g>
                        <Line points="873,1854 927,1833" color={YELLOW} />
                        <Line points="909,1856 927,1846" color="white" />
                    </Plot>
                </Panel>
            </Charts>
            <BottomBar>
                <Index>
                    <svg width="22" height="13" viewBox="0 0 22 13" fill={GRAY}><path d="M11 0l11 13H0z" /></svg>
                    <b className="point">3683.46</b>
                    <span className="rate">上证<b>0.48%</b></span>
                </Index>
                <NavItem><TradeIcon />交易</NavItem>
                <NavItem><PostIcon />发帖</NavItem>
                <NavItem><GridIcon />功能</NavItem>
                <NavItem><MoreIcon />设自选</NavItem>
                <HomeIndicator />
            </BottomBar>
        </Page>
    );
}

export default App
